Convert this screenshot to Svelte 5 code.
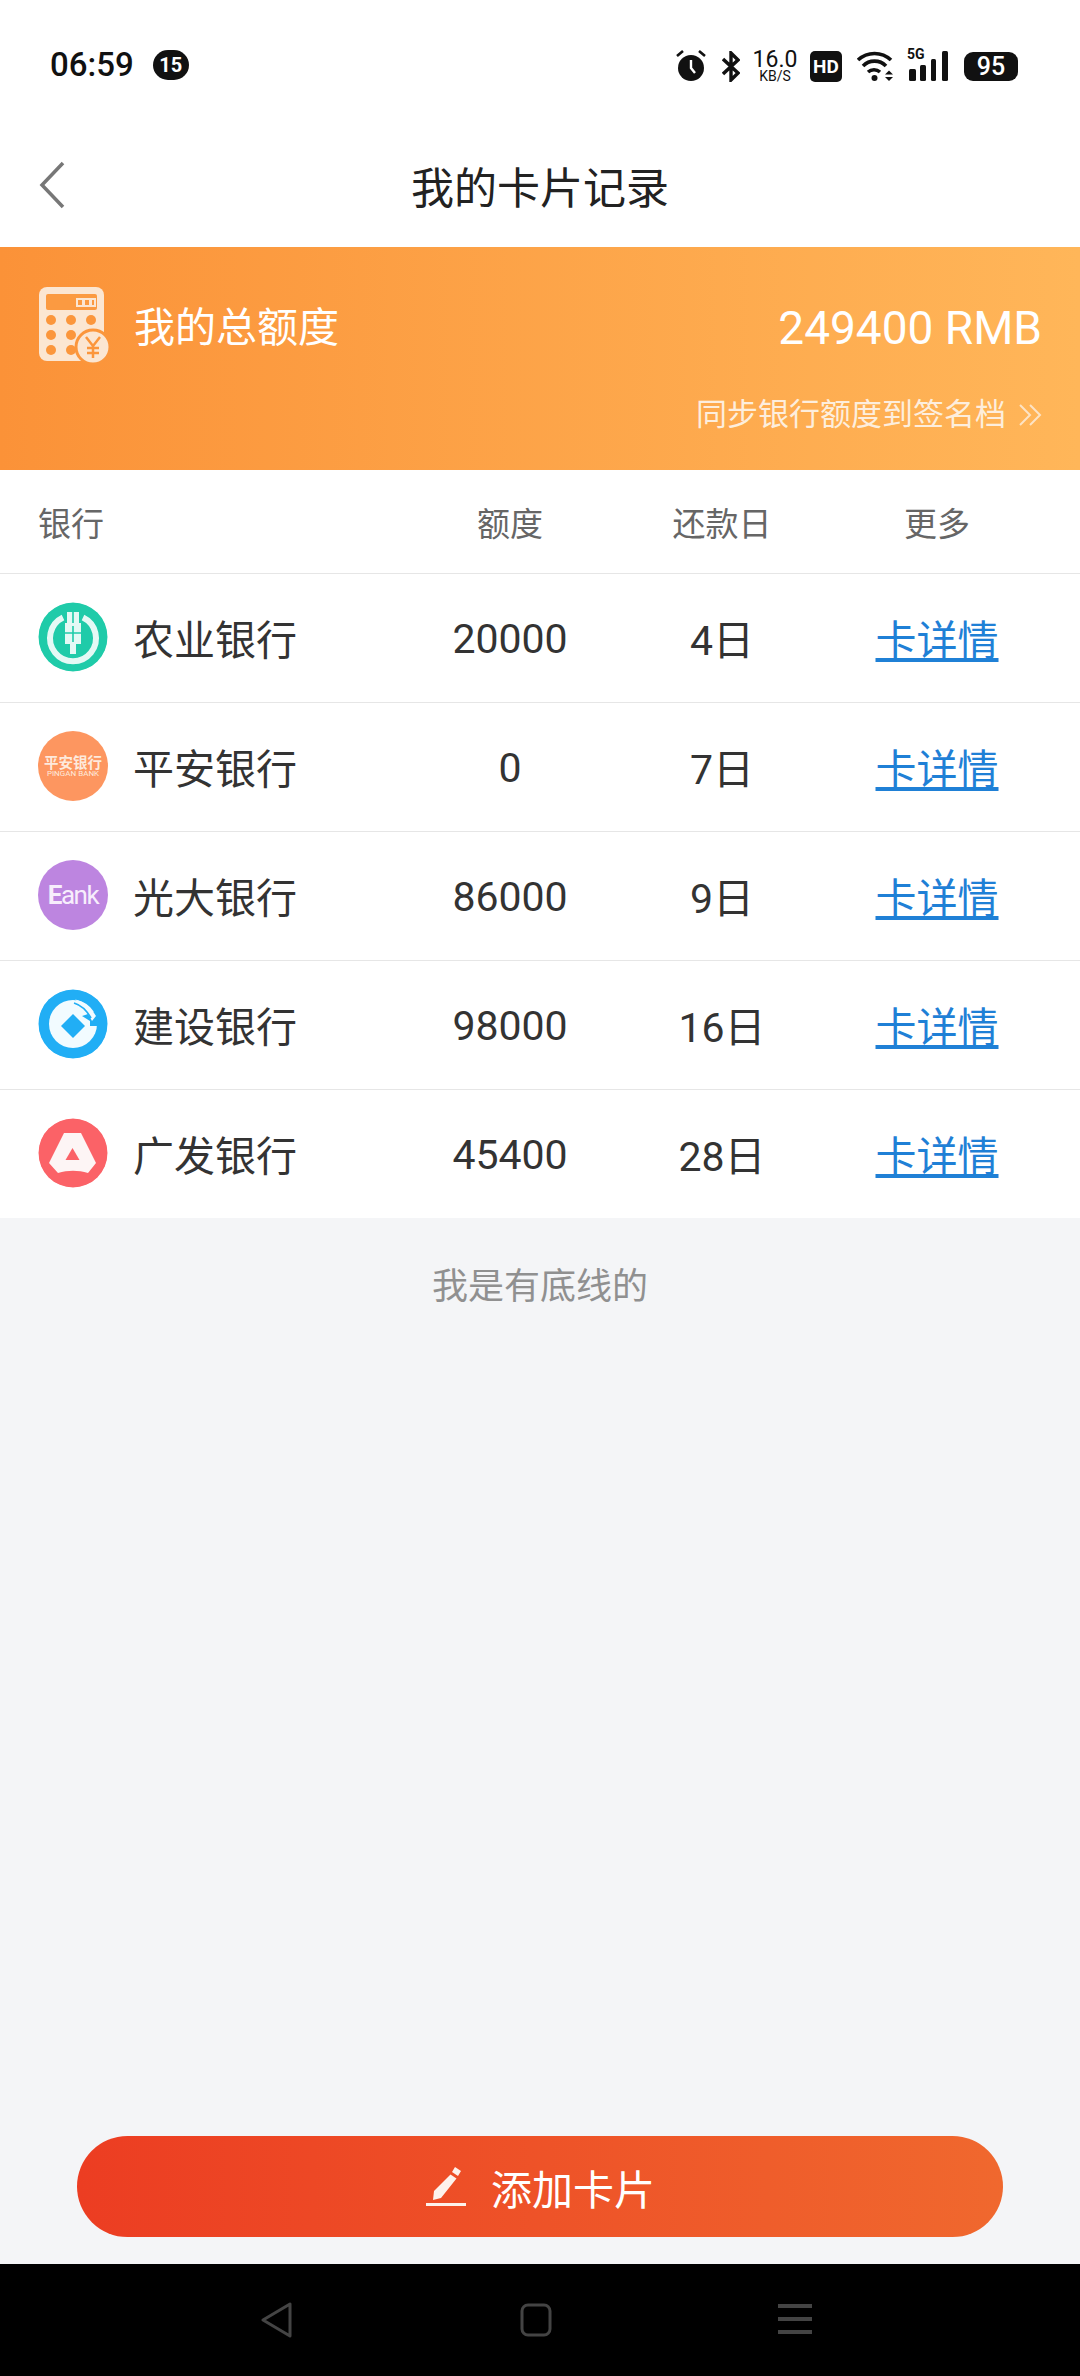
<script lang="ts">
	const banks = [
		{ name: '农业银行', limit: '20000', day: '4日', logo: 'abc' },
		{ name: '平安银行', limit: '0', day: '7日', logo: 'pingan' },
		{ name: '光大银行', limit: '86000', day: '9日', logo: 'ceb' },
		{ name: '建设银行', limit: '98000', day: '16日', logo: 'ccb' },
		{ name: '广发银行', limit: '45400', day: '28日', logo: 'cgb' }
	];
</script>

<div class="page">
	<div class="status">
		<div class="status-left">
			<span class="clock">06:59</span>
			<span class="badge">15</span>
		</div>
		<div class="status-right">
			<svg class="alarm" width="30" height="32" viewBox="0 0 30 32">
				<circle cx="15" cy="18" r="13" fill="#111" />
				<path d="M15 10v8l4 5" fill="none" stroke="#fff" stroke-width="2.400" />
				<path d="M1 6l6-5M29 6l-6-5" stroke="#111" stroke-width="2.600" />
			</svg>
			<svg class="bt" width="18" height="31" viewBox="0 0 18 31">
				<path d="M1 8l15 14-7 7V2l7 7L1 23" fill="none" stroke="#111" stroke-width="3.400" />
			</svg>
			<div class="speed"><span class="speed-num">16.0</span><span class="speed-unit">KB/S</span></div>
			<span class="hd">HD</span>
			<svg class="wifi" width="37" height="32" viewBox="0 0 37 32">
				<path d="M1 10a24 24 0 0 1 33 0M6 16a16 16 0 0 1 23 0M11 22a9 9 0 0 1 12 0" fill="none" stroke="#111" stroke-width="3.600" />
				<circle cx="17.500" cy="28" r="3" fill="#111" />
				<path d="M28 24.500l4-4 4 4zM28 27l4 4 4-4z" fill="#111" />
			</svg>
			<div class="signal">
				<span class="net">5G</span>
				<svg width="42" height="32" viewBox="0 0 42 32">
					<rect x="2" y="19" width="7" height="12" rx="1.500" fill="#111" />
					<rect x="13" y="15" width="6" height="16" rx="1.500" fill="#111" />
					<rect x="24" y="9" width="5" height="22" rx="1.500" fill="#111" />
					<rect x="35" y="1" width="6" height="30" rx="1.500" fill="#111" />
				</svg>
			</div>
			<div class="battery"><span>95</span></div>
		</div>
	</div>

	<header class="nav">
		<svg class="back" width="30" height="50" viewBox="0 0 30 50">
			<path d="M26 3L5 25l21 22" fill="none" stroke="#777" stroke-width="3.500" />
		</svg>
		<h1>我的卡片记录</h1>
	</header>

	<section class="banner">
		<div class="banner-top">
			<div class="banner-label">
				<svg class="calc" width="72" height="80" viewBox="0 0 72 80">
					<rect x="1" y="2" width="65" height="74" rx="8" fill="#fbe6d2" />
					<rect x="8" y="9" width="51" height="16" rx="2" fill="#fb9a41" />
					<circle cx="13" cy="35" r="5" fill="#fb963c" />
					<circle cx="33" cy="35" r="5" fill="#fb963c" />
					<circle cx="53" cy="35" r="5" fill="#fb963c" />
					<circle cx="13" cy="50" r="5" fill="#fb963c" />
					<circle cx="33" cy="50" r="5" fill="#fb963c" />
					<circle cx="13" cy="65" r="5" fill="#fb963c" />
					<circle cx="33" cy="65" r="5" fill="#fb963c" />
					<circle cx="55" cy="62" r="17" fill="#fbe6d2" stroke="#fb963c" stroke-width="3" />
					<path d="M48 52l7 9 7-9M55 61v12M49 63h12M49 68h12" fill="none" stroke="#fb963c" stroke-width="2.500" />
					<path d="M39 14v7h6v-7zM46 14v7h6v-7zM53 14v7h4v-7z" fill="none" stroke="#fbe6d2" stroke-width="2" />
				</svg>
				<span class="label-text">我的总额度</span>
			</div>
			<div class="total">249400 RMB</div>
		</div>
		<div class="sync">
			<span>同步银行额度到签名档</span>
			<svg width="24" height="24" viewBox="0 0 24 24">
				<path d="M2 2l10 10L2 22M12 2l10 10-10 10" fill="none" stroke="#fde3c4" stroke-width="2" />
			</svg>
		</div>
	</section>

	<section class="table">
		<div class="row head">
			<div class="col-name">银行</div>
			<div class="col-limit">额度</div>
			<div class="col-day">还款日</div>
			<div class="col-more">更多</div>
		</div>
		{#each banks as bank}
			<div class="row body">
				<div class="col-name">
					{#if bank.logo === 'abc'}
						<svg class="logo" viewBox="0 0 70 70">
							<circle cx="35" cy="35" r="34.500" fill="#1fcba9" />
							<path d="M25 15.500a23 23 0 1 0 20 0" fill="none" stroke="#e4f9f5" stroke-width="6" />
							<path d="M29 10h12v11h2v21h-5v10h-6V42h-5V21h2z" fill="#e4f9f5" />
							<path d="M35 10v11M27 31h16M35 24v16" stroke="#1fcba9" stroke-width="1.600" />
						</svg>
					{:else if bank.logo === 'pingan'}
						<div class="logo pingan">
							<span class="pa-cn">平安银行</span>
							<span class="pa-en">PINGAN BANK</span>
						</div>
					{:else if bank.logo === 'ceb'}
						<div class="logo ceb">
							<span class="ceb-e">E</span><span>ank</span>
						</div>
					{:else if bank.logo === 'ccb'}
						<svg class="logo" viewBox="0 0 70 70">
							<circle cx="35" cy="35" r="34.500" fill="#21aef5" />
							<circle cx="35" cy="35" r="24" fill="#f2fbff" />
							<path d="M44 27L62 21v16H52v-5z" fill="#21aef5" />
							<path d="M37 10.500C46 12 53 19 58 27l-4 5C49 22 43 15 37 10.500z" fill="#f2fbff" />
							<path d="M36 14C43 16 49 22 53 29" fill="none" stroke="#21aef5" stroke-width="1.800" />
							<path d="M35 25l12 12-12 12-12-12z" fill="#21aef5" />
						</svg>
					{:else}
						<svg class="logo" viewBox="0 0 70 70">
							<circle cx="35" cy="35" r="34.500" fill="#fb6267" />
							<path d="M26 15h17l15 30-8 10c-10-3-20-3-30 0l-9-10z" fill="#fdf5f5" />
							<path d="M34.500 30l7 12h-14z" fill="#fb6267" />
						</svg>
					{/if}
					<span>{bank.name}</span>
				</div>
				<div class="col-limit">{bank.limit}</div>
				<div class="col-day">{bank.day}</div>
				<div class="col-more"><a href="#detail">卡详情</a></div>
			</div>
		{/each}
	</section>

	<main class="rest">
		<p class="bottom-line">我是有底线的</p>
		<button class="add">
			<svg width="42" height="42" viewBox="0 0 42 42">
				<path d="M30 1l6 4-3 5-6-4zM25.500 8.500l6 4L16 32l-8 2 1-9z" fill="#fdf2ec" />
				<rect x="1" y="37" width="40" height="3" fill="#fdf2ec" />
			</svg>
			<span>添加卡片</span>
		</button>
	</main>

	<footer class="sysbar">
		<svg width="34" height="36" viewBox="0 0 34 36">
			<path d="M30 2v32L3 18z" fill="none" stroke="#444" stroke-width="3" stroke-linejoin="round" />
		</svg>
		<svg width="32" height="34" viewBox="0 0 32 34">
			<rect x="2" y="2" width="28" height="30" rx="6" fill="none" stroke="#444" stroke-width="3" />
		</svg>
		<svg width="34" height="32" viewBox="0 0 34 32">
			<path d="M0 2h34M0 15h34M0 28h34" stroke="#444" stroke-width="4" />
		</svg>
	</footer>
</div>

<style>
	:global(body) {
		margin: 0;
	}

	.page {
		width: 1080px;
		height: 2376px;
		display: flex;
		flex-direction: column;
		background: #f4f5f7;
		color: #333;
		font-family: Roboto, 'Noto Sans CJK SC', sans-serif;
	}

	.status {
		height: 104px;
		flex: none;
		background: #fff;
		padding: 0 62px 22px 50px;
		box-sizing: border-box;
		display: flex;
		justify-content: space-between;
		align-items: flex-end;
		color: #111;
	}

	.status-left {
		display: flex;
		align-items: center;
		gap: 19px;
	}

	.clock {
		font-size: 33px;
		font-weight: 500;
		line-height: 34px;
	}

	.badge {
		width: 36px;
		height: 30px;
		border-radius: 15px;
		background: #111;
		color: #fff;
		font-size: 20px;
		font-weight: 700;
		text-align: center;
		line-height: 30px;
	}

	.status-right {
		display: flex;
		align-items: center;
	}

	.bt {
		margin-left: 16px;
	}

	.speed {
		display: flex;
		flex-direction: column;
		align-items: center;
		width: 44px;
		margin-left: 13px;
	}

	.speed-num {
		font-size: 23px;
		line-height: 20px;
	}

	.speed-unit {
		font-size: 14px;
		line-height: 12px;
	}

	.hd {
		width: 32px;
		height: 31px;
		margin-left: 13px;
		background: #111;
		border-radius: 5px;
		color: #fff;
		font-size: 19px;
		font-weight: 700;
		text-align: center;
		line-height: 31px;
	}

	.wifi {
		margin-left: 15px;
	}

	.signal {
		position: relative;
		width: 42px;
		height: 32px;
		margin-left: 13px;
	}

	.net {
		position: absolute;
		left: 0;
		top: -4px;
		font-size: 14px;
		font-weight: 700;
		line-height: 16px;
	}

	.battery {
		width: 54px;
		height: 29px;
		margin-left: 15px;
		border-radius: 9px;
		background: #111;
		color: #fff;
		font-size: 25px;
		font-weight: 500;
		text-align: center;
		line-height: 29px;
	}

	.nav {
		height: 143px;
		flex: none;
		box-sizing: border-box;
		padding-top: 18px;
		position: relative;
		background: #fff;
		display: flex;
		align-items: center;
		justify-content: center;
	}

	.back {
		position: absolute;
		left: 37px;
		top: 56px;
	}

	h1 {
		margin: 0;
		font-size: 43px;
		font-weight: 400;
		color: #222;
	}

	.banner {
		height: 223px;
		flex: none;
		box-sizing: border-box;
		padding: 38px 38px 0;
		background: linear-gradient(90deg, #fb9238, #ffb659);
		color: #fff;
	}

	.banner-top {
		display: flex;
		justify-content: space-between;
		align-items: flex-start;
	}

	.banner-label {
		display: flex;
		align-items: flex-start;
		gap: 24px;
		font-size: 41px;
		line-height: 80px;
	}

	.label-text {
		margin-top: 3px;
	}

	.calc {
		flex: none;
	}

	.total {
		margin-top: 3px;
		font-size: 46px;
		line-height: 80px;
	}

	.sync {
		display: flex;
		justify-content: flex-end;
		align-items: center;
		gap: 12px;
		margin-top: 22px;
		font-size: 31px;
		line-height: 50px;
		color: #fdeedd;
	}

	.table {
		flex: none;
		background: #fff;
	}

	.row {
		height: 129px;
		box-sizing: border-box;
		display: flex;
		align-items: center;
		padding: 0 0 0 38px;
		font-size: 41px;
		color: #333;
		border-top: 1px solid #e6e6e6;
	}

	.body {
		padding-bottom: 2px;
	}

	.body .col-limit {
		margin-top: 3px;
	}

	.head {
		height: 103px;
		border-top: none;
		font-size: 33px;
		color: #666;
	}

	.col-name {
		width: 365px;
		display: flex;
		align-items: center;
		gap: 25px;
	}

	.col-limit,
	.col-day,
	.col-more {
		text-align: center;
	}

	.col-limit {
		width: 214px;
	}

	.col-day {
		width: 210px;
	}

	.col-more {
		width: 220px;
	}

	a {
		color: #1f80d6;
	}

	.logo {
		width: 70px;
		height: 70px;
		flex: none;
		border-radius: 50%;
	}

	.pingan {
		background: #fd9660;
		color: #fdeadd;
		display: flex;
		flex-direction: column;
		align-items: center;
		justify-content: center;
		font-family: 'Noto Sans CJK SC', sans-serif;
	}

	.pa-cn {
		font-size: 14.500px;
		font-weight: 700;
		line-height: 15px;
	}

	.pa-en {
		font-family: Roboto, sans-serif;
		font-size: 8px;
		line-height: 10px;
		white-space: nowrap;
	}

	.ceb {
		background: #bd85e0;
		color: #f7eefc;
		font-size: 26px;
		display: flex;
		align-items: center;
		justify-content: center;
		letter-spacing: -1.500px;
	}

	.ceb-e {
		font-weight: 700;
	}

	.rest {
		flex: 1;
		display: flex;
		flex-direction: column;
		justify-content: space-between;
		padding: 0 77px 27px;
	}

	.bottom-line {
		margin: 39px 0 0;
		text-align: center;
		font-size: 36px;
		color: #909090;
	}

	.add {
		height: 101px;
		border: none;
		border-radius: 51px;
		background: linear-gradient(90deg, #ec3d22, #f0682e);
		color: #fff;
		font-family: inherit;
		font-size: 41px;
		display: flex;
		align-items: center;
		justify-content: center;
		gap: 24px;
	}

	.sysbar {
		height: 112px;
		flex: none;
		background: #000;
		padding: 0 268px 0 260px;
		display: flex;
		align-items: center;
		justify-content: space-between;
	}
</style>
